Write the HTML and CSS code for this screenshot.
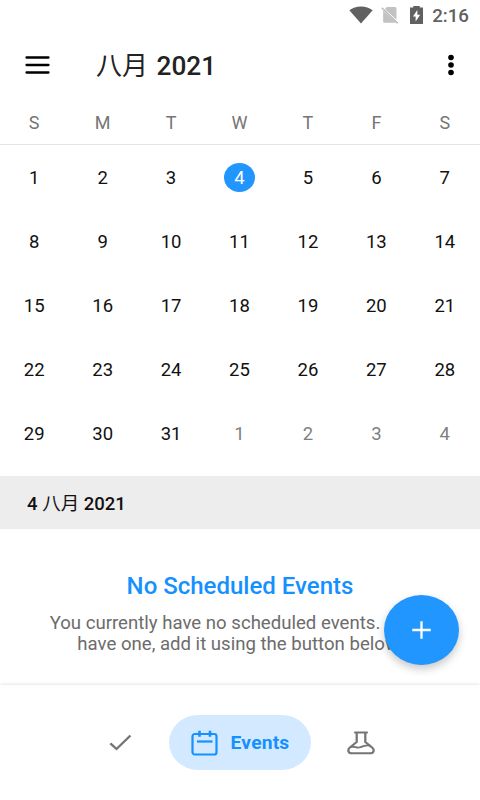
FILE: index.html
```html
<!DOCTYPE html>
<html lang="en">

<head>
    <meta charset="UTF-8">
    <meta name="viewport" content="width=device-width, initial-scale=1.0">
    <title>Calendar</title>
    <link rel="stylesheet" href="styles.css">
</head>

<body>
    <div class="screen">
        <div class="status-bar">
            <svg class="wifi" width="24" height="18" viewBox="0 0 22 18" preserveAspectRatio="none">
                <path d="M11 17.600 0.300 4.200C3.200 1.800 7 .4 11 .4s7.800 1.400 10.700 3.800z" fill="#616161"/>
            </svg>
            <svg class="sim" width="18" height="18" viewBox="0 0 17 18" preserveAspectRatio="none">
                <path d="M5.500 1H13c1 0 1.600.6 1.600 1.600v11.200L3.600 3zM2 4.500 14 16.300c-.3.4-.7.500-1.200.5H3.600C2.600 16.800 2 16.200 2 15.200z" fill="#c2c2c2"/>
                <path d="M.7 1.800 15.800 17.200" stroke="#b8b8b8" stroke-width="1.300"/>
            </svg>
            <svg class="battery" width="13" height="18" viewBox="0 0 12 18" preserveAspectRatio="none">
                <path d="M0 1.500h3V0h6v1.500H12V18H0z" fill="#616161"/>
                <path d="M6.800 4 2.700 10.400h2.500V15.600L9.400 8.800H6.800z" fill="#fff"/>
            </svg>
            <span class="clock">2:16</span>
        </div>

        <header class="toolbar">
            <svg class="menu" width="25" height="20" viewBox="0 0 25 20">
                <path d="M1.500 2.500H23.500M1.500 10H23.500M1.500 17.500H23.500" stroke="#000" stroke-width="2.300" stroke-linecap="round"/>
            </svg>
            <h1><span class="cjk">八月</span> 2021</h1>
            <svg class="more" width="6" height="22" viewBox="0 0 6 22">
                <circle cx="3" cy="3.500" r="2.800"/>
                <circle cx="3" cy="11" r="2.800"/>
                <circle cx="3" cy="18.500" r="2.800"/>
            </svg>
        </header>

        <div class="weekdays">
            <span>S</span><span>M</span><span>T</span><span>W</span><span>T</span><span>F</span><span>S</span>
        </div>

        <div class="days">
            <span>1</span><span>2</span><span>3</span><span class="today">4</span><span>5</span><span>6</span><span>7</span>
            <span>8</span><span>9</span><span>10</span><span>11</span><span>12</span><span>13</span><span>14</span>
            <span>15</span><span>16</span><span>17</span><span>18</span><span>19</span><span>20</span><span>21</span>
            <span>22</span><span>23</span><span>24</span><span>25</span><span>26</span><span>27</span><span>28</span>
            <span>29</span><span>30</span><span>31</span><span class="other">1</span><span class="other">2</span><span class="other">3</span><span class="other">4</span>
        </div>

        <div class="date-bar">4 <span class="cjk">八月</span> 2021</div>

        <main class="events">
            <h2>No Scheduled Events</h2>
            <p>You currently have no scheduled events. <span class="tail">If you</span><br>have one, add it using the button below.</p>
            <button class="fab" aria-label="Add event">
                <svg width="19" height="18" viewBox="0 0 19 18">
                    <path d="M9.500 .3v17.400M.3 9h18.400" stroke="#fff" stroke-width="2.300"/>
                </svg>
            </button>
        </main>

        <nav class="bottom-nav">
            <svg class="check" width="23" height="17" viewBox="0 0 22 17" fill="none" preserveAspectRatio="none">
                <path d="M1.300 9.300 7.200 15 20.500 1.500" stroke="#757575" stroke-width="2.300"/>
            </svg>
            <a class="pill">
                <svg width="27" height="26" viewBox="0 0 27 26" fill="none" stroke="#1590ff" stroke-width="2.200">
                    <rect x="1.500" y="4" width="24" height="20.500" rx="2.300"/>
                    <path d="M8.500 .8v6M19 .8v6" stroke-width="2.600"/>
                    <path d="M6 11.500h15.500"/>
                </svg>
                <span>Events</span>
            </a>
            <svg class="flask" width="28" height="24" viewBox="0 0 26 24" fill="none" stroke="#757575" stroke-width="2.100" stroke-linejoin="round" stroke-linecap="round" preserveAspectRatio="none">
                <path d="M7.500 1.500h11M9 1.500v9.500L2.700 16.500C.2 18.700 1 22.300 4.500 22.300h17c3.500 0 4.300-3.600 1.800-5.800L17 11V1.500"/>
                <path d="M4 16c3-1.400 5 1.800 8.500.2 3-1.500 5-2.200 8.500-1.700" stroke-width="1.900"/>
            </svg>
        </nav>
    </div>
</body>

</html>
```
FILE: styles.css
```css
body {
    margin: 0;
    background: #fff;
    font-family: Roboto, "Noto Sans CJK SC", sans-serif;
    overflow: hidden;
}

.screen {
    width: 480px;
    height: 800px;
    display: flex;
    flex-direction: column;
    background: #fff;
}

.cjk {
    font-family: "Noto Sans CJK SC", sans-serif;
    font-weight: 400;
}

.status-bar {
    height: 30px;
    box-sizing: border-box;
    padding-right: 11px;
    display: flex;
    justify-content: flex-end;
    align-items: center;
    color: #616161;
}

.sim {
    margin-left: 8px;
}

.battery {
    margin-left: 11px;
}

.clock {
    margin-left: 9px;
    padding-top: 2px;
    font-size: 18.7px;
    font-weight: 500;
}

.toolbar {
    height: 70px;
    display: flex;
    align-items: center;
    padding: 0 26px 0 25px;
}

.toolbar h1 {
    flex: 1;
    margin: 0 0 1px 46px;
    font-size: 26.2px;
    line-height: 30px;
    font-weight: 500;
    color: #222;
}

.toolbar .cjk {
    font-size: 26px;
    margin-right: 2px;
}

.weekdays {
    height: 44px;
    padding-right: 1px;
    display: grid;
    grid-template-columns: repeat(7, 1fr);
    align-items: center;
    text-align: center;
    font-size: 18px;
    color: #757575;
    border-bottom: 1px solid #e4e4e4;
}

.days {
    height: 331px;
    box-sizing: border-box;
    padding: 1px 1px 0 0;
    display: grid;
    grid-template-columns: repeat(7, 1fr);
    grid-auto-rows: 64px;
    justify-items: center;
    font-size: 18.5px;
    line-height: 65px;
    color: #111;
}

.days .today {
    width: 31px;
    height: 29px;
    margin-bottom: 2px;
    line-height: 30px;
    align-self: center;
    border-radius: 50%;
    background: #2196ff;
    color: #fff;
    text-align: center;
}

.days .other {
    color: #808080;
}

.date-bar {
    height: 53px;
    line-height: 52px;
    padding-left: 27px;
    background: #ededed;
    font-size: 18.5px;
    font-weight: 500;
    color: #111;
}

.events {
    position: relative;
    height: 156px;
    text-align: center;
}

.events h2 {
    margin: 0;
    padding-top: 43px;
    font-size: 24px;
    line-height: 28px;
    font-weight: 500;
    color: #1590ff;
}

.events p {
    margin: 13px 0 0;
    font-size: 18.6px;
    line-height: 21px;
    color: #6c6c6c;
}

.events .tail {
    margin-left: 4px;
    letter-spacing: -0.7px;
}

/* floats over the text */
.fab {
    position: absolute;
    right: 21px;
    top: 66px;
    width: 75px;
    height: 70px;
    padding: 0;
    border: none;
    border-radius: 50%;
    background: #2196ff;
    box-shadow: 0 4px 9px rgba(0, 0, 0, 0.22);
    display: flex;
    align-items: center;
    justify-content: center;
}

.bottom-nav {
    flex: 1;
    box-sizing: border-box;
    padding-left: 5px;
    display: flex;
    align-items: center;
    justify-content: center;
    gap: 36px;
    background: #fff;
    box-shadow: 0 -1px 3px rgba(0, 0, 0, 0.1);
}

.check {
    margin-left: -1px;
    margin-right: 1px;
}

.pill {
    width: 142px;
    height: 55px;
    display: flex;
    align-items: center;
    justify-content: center;
    gap: 13px;
    border-radius: 30px / 28px;
    background: #d3e9ff;
    color: #1590ff;
    font-size: 19.2px;
    font-weight: 700;
    letter-spacing: 0.2px;
}
```
